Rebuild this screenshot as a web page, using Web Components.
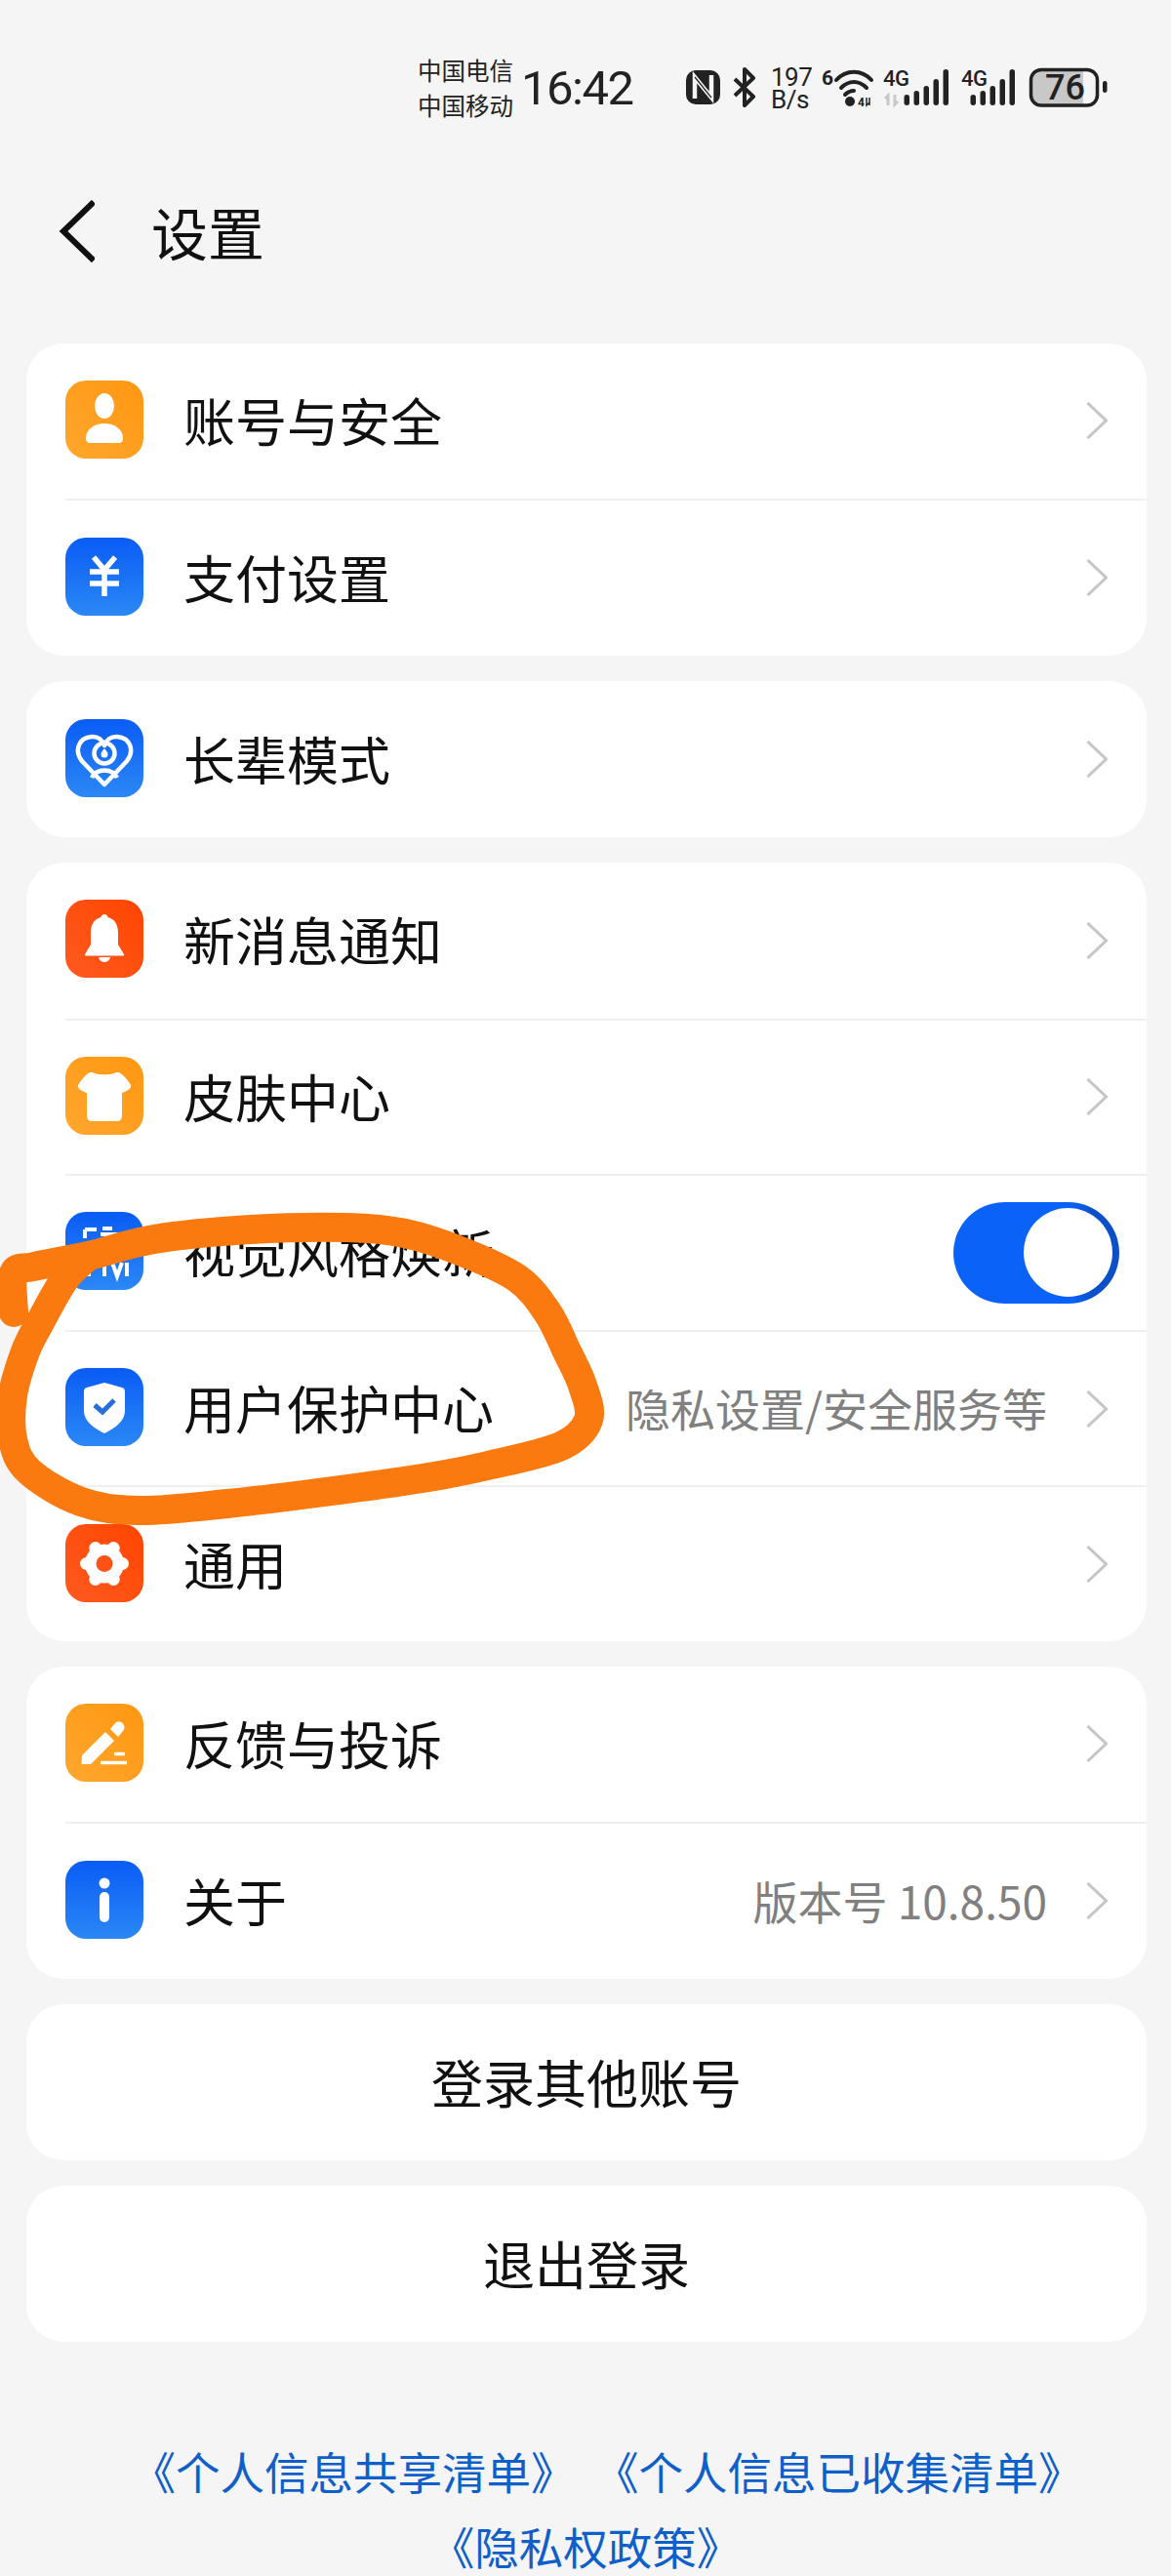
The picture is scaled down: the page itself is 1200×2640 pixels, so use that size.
<!DOCTYPE html>
<html lang="zh">
<head>
<meta charset="utf-8">
<title>设置</title>
<style>
  html, body {
    margin: 0;
    height: 2640px;
    overflow: hidden;
    background: #f5f5f5;
    font-family: "Noto Sans CJK SC", "Noto Sans", sans-serif;
    color: #111;
  }
</style>
</head>
<body>
<settings-page>
  <status-bar></status-bar>
  <title-bar label="设置"></title-bar>
  <card-list>
    <settings-card>
      <settings-row style="--row-height:158.5px" label="账号与安全"><app-icon name="person" tone="orange"></app-icon></settings-row>
      <settings-row style="--row-height:161.5px" label="支付设置"><app-icon name="yen" tone="blue"></app-icon></settings-row>
    </settings-card>
    <settings-card>
      <settings-row label="长辈模式"><app-icon name="heart" tone="blue"></app-icon></settings-row>
    </settings-card>
    <settings-card>
      <settings-row style="--row-height:159.6px" label="新消息通知"><app-icon name="bell" tone="red"></app-icon></settings-row>
      <settings-row style="--row-height:159.6px" label="皮肤中心"><app-icon name="shirt" tone="orange"></app-icon></settings-row>
      <settings-row style="--row-height:159.6px" label="视觉风格焕新" toggle><app-icon name="fresh" tone="blue"></app-icon></settings-row>
      <settings-row style="--row-height:159.6px" label="用户保护中心" value="隐私设置/安全服务等"><app-icon name="shield" tone="blue"></app-icon></settings-row>
      <settings-row style="--row-height:159.6px" label="通用"><app-icon name="gear" tone="red"></app-icon></settings-row>
    </settings-card>
    <settings-card>
      <settings-row style="--row-height:159px" label="反馈与投诉"><app-icon name="pen" tone="orange"></app-icon></settings-row>
      <settings-row style="--row-height:161px" label="关于" value="版本号 10.8.50"><app-icon name="info" tone="blue"></app-icon></settings-row>
    </settings-card>
    <action-button>登录其他账号</action-button>
    <action-button>退出登录</action-button>
  </card-list>
  <policy-links></policy-links>
  <marker-scribble></marker-scribble>
</settings-page>

<script>
const ICONS = {
  person: `<ellipse cx="40" cy="26" rx="10" ry="13" fill="#fff"/>
    <path d="M21 59c0-9 9-15 19-15s19 6 19 15c0 4-2 5-5 5H26c-3 0-5-1-5-5z" fill="#fff"/>`,
  yen: `<path d="M29 20l11 13 11-13M25 35h30M25 47h30M40 33v27" fill="none" stroke="#fff" stroke-width="5.5"/>`,
  heart: `<g fill="none" stroke="#fff" stroke-width="4.5" stroke-linejoin="round">
      <path d="M40 67L17 43C9 33 13 19 27 18c6-.5 11 3 13 9 2-6 7-9.500 13-9 14 1 18 15 10 25z"/>
      <circle cx="40" cy="35" r="10.500"/>
      <path d="M27 60c5-10 21-10 26 0"/>
    </g>
    <path d="M40 30c2 2.500 3.500 4 3.500 6a3.500 3.500 0 0 1-7 0c0-2 1.500-3.500 3.500-6z" fill="#fff"/>`,
  bell: `<path d="M40 15c2 0 3 1 3.500 3C51 20 54 26 54 34v12l6 10c.5 1 0 1.500-1 1.500H21c-1 0-1.500-.5-1-1.500l6-10V34c0-8 3-14 10.500-16 .5-2 1.500-3 3.500-3z" fill="#fff"/>
    <path d="M34 59h12c-1 4-4 5-6 5s-5-1-6-5z" fill="#fff"/>`,
  shirt: `<path d="M28 16c4 3 20 3 24 0h3c5 3 9 8 12 13 1 3-3 6-9 8v23c0 4-2 6-5 6H27c-3 0-5-2-5-6V37c-6-2-10-5-9-8 3-5 7-10 12-13z" fill="#fff"/>`,
  fresh: `<path d="M20 18h12M20 18v9M38 17h10M36 23h26M40 52v14M48 52l5 14 5-14M63 52v14M24 50v16" fill="none" stroke="#fff" stroke-width="4"/>`,
  shield: `<path d="M40 15l18 5c2 .5 3 2 3 4v20c0 11-11 18-21 23-10-5-21-12-21-23V24c0-2 1-3.500 3-4z" fill="#fff"/>
    <path d="M30 38l8 7 12-12" fill="none" stroke="#2a6fd8" stroke-width="5"/>`,
  gear: `<g fill="#fff">
      <circle cx="40" cy="40.500" r="20"/>
      <circle cx="58.500" cy="40.500" r="6.500"/><circle cx="21.500" cy="40.500" r="6.500"/>
      <circle cx="49.250" cy="24.500" r="6.500"/><circle cx="30.750" cy="24.500" r="6.500"/>
      <circle cx="49.250" cy="56.500" r="6.500"/><circle cx="30.750" cy="56.500" r="6.500"/>
    </g>
    <circle cx="40" cy="40.500" r="8.500" fill="#ff5216"/>`,
  pen: `<path d="M16.500 62l.5-9 24-24 9 9-24 24z" fill="#fff"/>
    <path d="M46 26l5-6c2-2 6-2 8 .5s2 5.500 0 7.500l-5 6z" fill="#fff"/>
    <path d="M50 51.500h11M36 60.500h27" stroke="#fff" stroke-width="3.500"/>`,
  info: `<circle cx="40" cy="23" r="5.500" fill="#fff"/>
    <rect x="35" y="32" width="10" height="31" rx="5" fill="#fff"/>`
};

class SettingsPage extends HTMLElement {
  constructor() {
    super();
    this.attachShadow({mode: 'open'});
  }

  connectedCallback() {
    this.shadowRoot.innerHTML = `
      <style>
        :host {
          display: block;
          position: relative;
          width: 1200px;
          height: 2640px;
        }
      </style>
      <slot></slot>
    `;
  }
}

// <status-bar>
class StatusBar extends HTMLElement {
  constructor() {
    super();
    this.attachShadow({mode: 'open'});
  }

  bars(x) {
    const tops = [97, 93, 88, 81, 71];
    return tops.map((top, i) =>
      `<rect x="${x + i * 10 - 2.5}" y="${top}" width="5.500" height="${108 - top}" rx="2.750"/>`
    ).join('');
  }

  connectedCallback() {
    this.shadowRoot.innerHTML = `
      <style>
        :host {
          display: flex;
          align-items: center;
          height: 179px;
          padding-left: 428px;
          color: #222;
        }
        .carriers {
          display: flex;
          flex-direction: column;
          font-size: 24.500px;
          line-height: 36px;
          width: 106px;
        }
        .time {
          font-family: Roboto, "Noto Sans", sans-serif;
          font-size: 49px;
          letter-spacing: -1.500px;
          width: 166px;
          padding-top: 2px;
        }
        svg {
          display: block;
          align-self: flex-start;
          width: 440px;
          height: 65px;
          margin-top: 60px;
        }
        text {
          font-family: Roboto, "Noto Sans", sans-serif;
          fill: #222;
        }
      </style>
      <div class="carriers"><span>中国电信</span><span>中国移动</span></div>
      <div class="time">16:42</div>
      <svg viewBox="700 60 440 65" fill="#222">
        <rect x="703" y="72" width="35" height="35" rx="10"/>
        <path d="M712 101V79l17 21V77" fill="none" stroke="#f5f5f5" stroke-width="4.500"/>
        <path d="M712 79l17 21" fill="none" stroke="#222" stroke-width="1.200"/>
        <path d="M753 81l19 18-9 9V71l9 9-19 18" fill="none" stroke="#222" stroke-width="4" stroke-linejoin="round"/>
        <text font-size="26" letter-spacing="-.5"><tspan x="790" y="88">197</tspan><tspan x="790" y="111">B/s</tspan></text>
        <text x="842" y="87" font-size="21" font-weight="700">6</text>
        <g fill="none" stroke="#222" stroke-width="4" stroke-linecap="round">
          <path d="M857 82c10-11 26-11 36 0"/>
          <path d="M862 90c8-8 18-8 26 0"/>
          <path d="M866 97c3-3 6-4 9-4"/>
        </g>
        <circle cx="871" cy="104" r="5"/>
        <text x="879" y="109" font-size="12" font-weight="700">4</text>
        <path d="M888 100v8l3-3M891 108v-8" fill="none" stroke="#222" stroke-width="1.500"/>
        <text x="905" y="88" font-size="22" font-weight="500" letter-spacing="-.5">4G</text>
        <path d="M910 108V98l-3 3M917 97v10l3-3" fill="none" stroke="#c8c8c8" stroke-width="3"/>
        ${this.bars(929)}
        <text x="985" y="88" font-size="22" font-weight="500" letter-spacing="-.5">4G</text>
        ${this.bars(997)}
        <path d="M1066 72h44v35h-44a9 9 0 0 1-9-9V81a9 9 0 0 1 9-9z" fill="#c8c8c8"/>
        <rect x="1056.500" y="71.500" width="68" height="36.500" rx="10.500" fill="none" stroke="#222" stroke-width="3.500"/>
        <text x="1071" y="102" font-size="36" font-weight="500">76</text>
        <rect x="1130" y="83" width="4.500" height="12" rx="2.250"/>
      </svg>
    `;
  }
}

// <title-bar label="">
class TitleBar extends HTMLElement {
  constructor() {
    super();
    this.attachShadow({mode: 'open'});
  }

  connectedCallback() {
    this.shadowRoot.innerHTML = `
      <style>
        :host {
          display: flex;
          align-items: center;
          height: 116px;
          padding-left: 60px;
          gap: 58px;
        }
        svg {
          display: block;
          width: 37px;
          height: 64px;
        }
        span {
          font-size: 58px;
          color: #111;
        }
      </style>
      <svg viewBox="0 0 37 64"><path d="M36 2L5 32l31 30" fill="none" stroke="#111" stroke-width="6"/></svg>
      <span>${this.getAttribute('label')}</span>
    `;
  }
}

class CardList extends HTMLElement {
  constructor() {
    super();
    this.attachShadow({mode: 'open'});
  }

  connectedCallback() {
    this.shadowRoot.innerHTML = `
      <style>
        :host {
          display: flex;
          flex-direction: column;
          gap: 26px;
          padding: 57px 25px 0 27px;
        }
      </style>
      <slot></slot>
    `;
  }
}

class SettingsCard extends HTMLElement {
  constructor() {
    super();
    this.attachShadow({mode: 'open'});
  }

  connectedCallback() {
    this.shadowRoot.innerHTML = `
      <style>
        :host {
          display: block;
          background: #fff;
          border-radius: 38px;
          overflow: hidden;
        }
      </style>
      <slot></slot>
    `;
  }
}

// <settings-row label="" value="" toggle>
class SettingsRow extends HTMLElement {
  constructor() {
    super();
    this.attachShadow({mode: 'open'});
  }

  connectedCallback() {
    const value = this.getAttribute('value');
    const trailing = this.hasAttribute('toggle')
      ? `<div class="track"><div class="knob"></div></div>`
      : `${value ? `<span class="value">${value}</span>` : ''}
         <svg class="chevron" viewBox="0 0 22 38"><path d="M1.500 1l19 18-19 18" fill="none" stroke="#c6c6c6" stroke-width="3"/></svg>`;

    this.shadowRoot.innerHTML = `
      <style>
        :host {
          display: block;
          padding-left: 40px;
        }
        .inner {
          display: flex;
          align-items: center;
          box-sizing: border-box;
          height: var(--row-height, 160px);
          padding-right: 40px;
        }
        :host(:not(:first-child)) .inner {
          border-top: 2px solid #f0f0f0;
        }
        .label {
          flex: 1;
          margin-left: 41px;
          padding-bottom: 3px;
          font-size: 53px;
          white-space: nowrap;
          color: #111;
        }
        .value {
          font-size: 46px;
          color: #808080;
          margin-right: 40px;
          padding-bottom: 3px;
          white-space: nowrap;
        }
        .chevron {
          display: block;
          width: 22px;
          height: 38px;
        }
        .track {
          display: flex;
          align-items: center;
          justify-content: flex-end;
          box-sizing: border-box;
          width: 170px;
          height: 104px;
          margin-right: -12px;
          padding-right: 7px;
          border-radius: 52px;
          background: linear-gradient(90deg, #0a62f8 72%, #0b50c9 84%);
        }
        .knob {
          width: 91px;
          height: 91px;
          border-radius: 50%;
          background: #fff;
        }
      </style>
      <div class="inner">
        <slot></slot>
        <span class="label">${this.getAttribute('label')}</span>
        ${trailing}
      </div>
    `;
  }
}

// <app-icon name="" tone="">
class AppIcon extends HTMLElement {
  constructor() {
    super();
    this.attachShadow({mode: 'open'});
  }

  connectedCallback() {
    this.shadowRoot.innerHTML = `
      <style>
        :host {
          display: block;
          flex: none;
          width: 80px;
          height: 80px;
          margin-bottom: 3px;
          border-radius: 21px;
          overflow: hidden;
        }
        :host([tone="orange"]) { background: linear-gradient(45deg, #ffa72e, #ff9711); }
        :host([tone="blue"]) { background: linear-gradient(180deg, #0a5cf5, #2b88f5); }
        :host([tone="red"]) { background: linear-gradient(45deg, #ff5a20, #ff4500); }
        svg {
          display: block;
          width: 80px;
          height: 80px;
        }
      </style>
      <svg viewBox="0 0 80 80">${ICONS[this.getAttribute('name')]}</svg>
    `;
  }
}

class ActionButton extends HTMLElement {
  constructor() {
    super();
    this.attachShadow({mode: 'open'});
  }

  connectedCallback() {
    this.shadowRoot.innerHTML = `
      <style>
        :host {
          display: flex;
          align-items: center;
          justify-content: center;
          box-sizing: border-box;
          height: 160px;
          padding-bottom: 2px;
          background: #fff;
          border-radius: 38px;
          font-size: 53px;
          color: #111;
        }
      </style>
      <slot></slot>
    `;
  }
}

class PolicyLinks extends HTMLElement {
  constructor() {
    super();
    this.attachShadow({mode: 'open'});
  }

  connectedCallback() {
    this.shadowRoot.innerHTML = `
      <style>
        :host {
          display: block;
          padding-top: 94px;
          font-size: 45.500px;
          line-height: 77px;
          color: #0e5fc9;
          text-align: center;
          white-space: nowrap;
        }
        .first {
          padding-left: 44px;
        }
        .first span + span {
          margin-left: 42px;
        }
      </style>
      <div class="first"><span>《个人信息共享清单》</span><span>《个人信息已收集清单》</span></div>
      <div><span>《隐私权政策》</span></div>
    `;
  }
}

// the hand drawn circle on top of the screenshot
class MarkerScribble extends HTMLElement {
  constructor() {
    super();
    this.attachShadow({mode: 'open'});
  }

  smooth(points) {
    let d = `M${points[0]}`;
    for (let i = 0; i < points.length - 1; i++) {
      const p0 = points[i - 1] || points[i];
      const p1 = points[i];
      const p2 = points[i + 1];
      const p3 = points[i + 2] || p2;
      const c1 = [p1[0] + (p2[0] - p0[0]) / 6, p1[1] + (p2[1] - p0[1]) / 6];
      const c2 = [p2[0] - (p3[0] - p1[0]) / 6, p2[1] - (p3[1] - p1[1]) / 6];
      d += `C${c1} ${c2} ${p2}`;
    }
    return d;
  }

  connectedCallback() {
    const points = [
      [14, 1345], [14, 1305], [35, 1298], [91, 1287], [158, 1270], [257, 1260],
      [356, 1258], [415, 1264], [474, 1283], [530, 1310], [561, 1345], [581, 1385],
      [597, 1420], [603, 1455], [575, 1482], [500, 1502], [433, 1515], [333, 1529],
      [233, 1541], [143, 1548], [83, 1539], [30, 1508], [13, 1475], [13, 1430],
      [26, 1385], [40, 1357], [67, 1310], [91, 1287]
    ];

    this.shadowRoot.innerHTML = `
      <style>
        :host {
          position: absolute;
          top: 0;
          left: 0;
          width: 1200px;
          height: 2640px;
          pointer-events: none;
        }
        svg {
          display: block;
        }
      </style>
      <svg width="1200" height="2640" viewBox="0 0 1200 2640">
        <path d="${this.smooth(points)}" fill="none" stroke="#fb7a10" stroke-width="30" stroke-linecap="round" stroke-linejoin="round"/>
      </svg>
    `;
  }
}

if(window.customElements) {
  customElements.define('settings-page', SettingsPage);
  customElements.define('status-bar', StatusBar);
  customElements.define('title-bar', TitleBar);
  customElements.define('card-list', CardList);
  customElements.define('settings-card', SettingsCard);
  customElements.define('settings-row', SettingsRow);
  customElements.define('app-icon', AppIcon);
  customElements.define('action-button', ActionButton);
  customElements.define('policy-links', PolicyLinks);
  customElements.define('marker-scribble', MarkerScribble);
}
</script>
</body>
</html>
